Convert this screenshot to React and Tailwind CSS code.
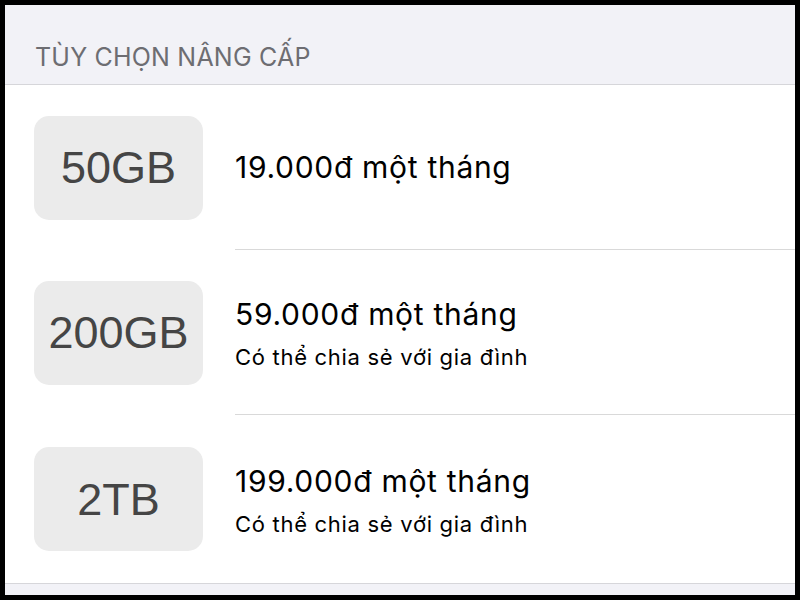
import React from "react";

const plans = [
  { size: "50GB", price: "19.000đ một tháng", sub: null, h: "h-[165px]", border: true },
  { size: "200GB", price: "59.000đ một tháng", sub: "Có thể chia sẻ với gia đình", h: "h-[165px]", border: true },
  { size: "2TB", price: "199.000đ một tháng", sub: "Có thể chia sẻ với gia đình", h: "h-[168px]", border: false },
];

export default function App() {
  return (
    <div className="w-[800px] h-[600px] bg-black p-[5px]">
      <div className="w-full h-full bg-[#f2f2f7] flex flex-col">
        <div
          className="h-[80px] border-b border-[#d6d6da] pl-[30px] pt-[40px] text-[25px] leading-[25px] text-[#6d6d72] tracking-[0.2px]"
          style={{ fontFamily: "Inter, 'Noto Sans', sans-serif" }}
        >
          TÙY CHỌN NÂNG CẤP
        </div>
        <div className="bg-white border-b border-[#d6d6da]">
          {plans.map((p) => (
            <div key={p.size} className={`flex items-stretch ${p.h} pl-[29px]`}>
              <div className="self-center w-[169px] h-[104px] rounded-[15px] bg-[#ebebeb] flex items-center justify-center">
                <span
                  className="text-[45px] leading-none text-[#454545]"
                  style={{ fontFamily: "'Liberation Sans', Arial, sans-serif" }}
                >
                  {p.size}
                </span>
              </div>
              <div
                className={`flex-1 ml-[32px] flex flex-col justify-center ${p.sub ? "pt-[3px]" : ""} ${p.border ? "border-b border-[#d9d9d9]" : ""}`}
                style={{ fontFamily: "Inter, 'Noto Sans', sans-serif" }}
              >
                <div className="text-[30px] leading-[34px] tracking-[0.7px] text-black">{p.price}</div>
                {p.sub && (
                  <div className="mt-[12px] text-[22px] leading-[28px] tracking-[0.7px] text-black">{p.sub}</div>
                )}
              </div>
            </div>
          ))}
        </div>
      </div>
    </div>
  );
}
